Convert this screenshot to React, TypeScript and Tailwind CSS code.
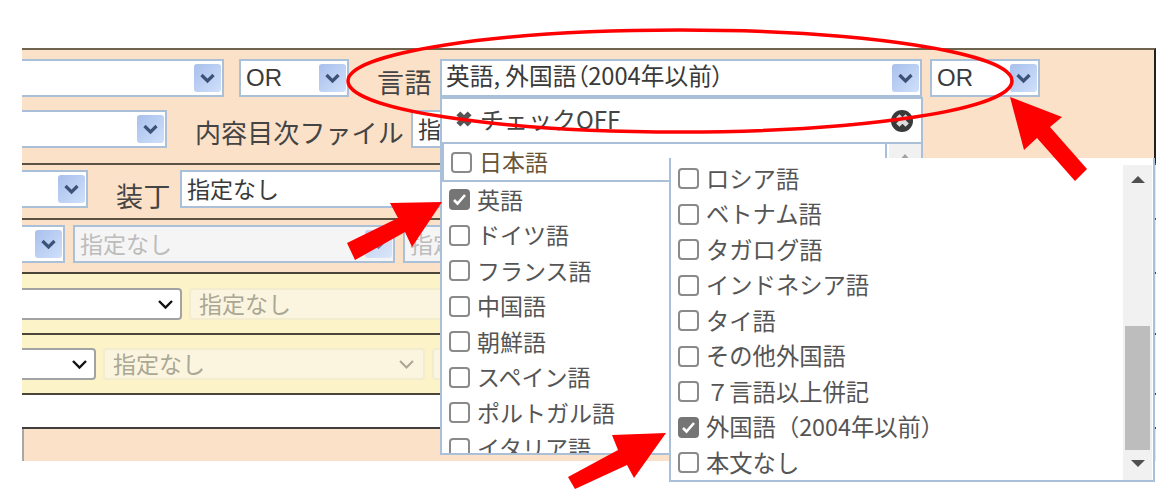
const leftLanguages = ["英語", "ドイツ語", "フランス語", "中国語", "朝鮮語", "スペイン語", "ポルトガル語", "イタリア語"];

const rightLanguages = [
  { name: "ロシア語", checked: false },
  { name: "ベトナム語", checked: false },
  { name: "タガログ語", checked: false },
  { name: "インドネシア語", checked: false },
  { name: "タイ語", checked: false },
  { name: "その他外国語", checked: false },
  { name: "７言語以上併記", checked: false },
  { name: "外国語（2004年以前）", checked: true },
  { name: "本文なし", checked: false },
];

function BlueChevron({ faded = false }: { faded?: boolean }) {
  return (
    <span
      className={`flex h-[28px] w-[27px] shrink-0 items-center justify-center rounded-[3px] bg-gradient-to-br from-[#a9c0ec] to-[#cfe0fb] ${faded ? "opacity-70" : ""}`}
    >
      <svg width="17" height="11" viewBox="0 0 17 11" fill="none">
        <path d="M2.5 2l6 6 6-6" stroke="#3d5278" strokeWidth="3.2" />
      </svg>
    </span>
  );
}

function Field({ className, children, text = "", latin = false, noLeft = false, disabled = false }: { className: string; children?: React.ReactNode; text?: string; latin?: boolean; noLeft?: boolean; disabled?: boolean }) {
  return (
    <div
      className={`flex h-[38px] items-center justify-between border-2 border-[#a9c0d8] pl-[5px] pr-[1px] ${noLeft ? "border-l-0" : ""} ${disabled ? "bg-[#f5f5f5] text-[#bcbcbc]" : "bg-white text-[#3a3a3a]"} ${className}`}
    >
      <span className={`whitespace-nowrap leading-[30px] ${latin ? "-mt-[1px] font-['Liberation_Sans',sans-serif] text-[24px]" : "-mt-[3px] text-[23px]"}`}>{text}</span>
      {children}
    </div>
  );
}

function YellowDisabled({ className, chevron = false }: { className: string; chevron?: boolean }) {
  return (
    <div className={`flex h-[32px] items-center justify-between rounded-[4px] border-2 border-[#f3eccf] bg-[#fbf5df] pl-[8px] pr-[8px] text-[#aaa794] ${className}`}>
      <span className="-mt-[3px] whitespace-nowrap text-[23px] leading-[28px]">指定なし</span>
      {chevron && (
        <svg width="17" height="11" viewBox="0 0 17 11" fill="none">
          <path d="M2 2l6.5 6.5L15 2" stroke="#aaa794" strokeWidth="2" />
        </svg>
      )}
    </div>
  );
}

function BlackSelect({ className }: { className: string }) {
  return (
    <div className={`flex h-[32px] items-center justify-end rounded-r-[4px] border-2 border-l-0 border-[#a3a3a3] bg-white pr-[6px] ${className}`}>
      <svg width="17" height="11" viewBox="0 0 17 11" fill="none">
        <path d="M2 2l6.5 6.5L15 2" stroke="#111111" strokeWidth="2.4" />
      </svg>
    </div>
  );
}

function Check({ checked = false }: { checked?: boolean }) {
  if (checked) {
    return (
      <span className="flex h-[21px] w-[21px] shrink-0 items-center justify-center rounded-[4px] bg-[#757575]">
        <svg width="15" height="13" viewBox="0 0 15 13" fill="none">
          <path d="M2 7l3.5 3.5L13 2" stroke="white" strokeWidth="2.6" />
        </svg>
      </span>
    );
  }
  return <span className="h-[21px] w-[21px] shrink-0 rounded-[4px] border-2 border-[#8a8a8a] bg-white" />;
}

function Cross({ color, size = 16 }: { color: string; size?: number }) {
  return (
    <svg width={size} height={size} viewBox="0 0 16 16" fill="none">
      <path d="M3 3l10 10M13 3L3 13" stroke={color} strokeWidth="5" />
    </svg>
  );
}

export default function App() {
  return (
    <div className="relative h-[489px] w-[1167px] overflow-hidden bg-white font-['Noto_Sans_CJK_JP','Noto_Sans',sans-serif] text-[#333333]">
      <div className="ml-[22px] flex w-[1134px] flex-col pt-[48px]">
        <section className="flex h-[115px] flex-col gap-[13px] border-t-2 border-r-2 border-t-[#6f6450] border-r-[#222222] bg-[#fbe1c8] pt-[9px]">
          <div className="flex items-center">
            <Field className="w-[202px]" noLeft>
              <BlueChevron />
            </Field>
            <Field className="ml-[15px] w-[110px]" text="OR" latin>
              <BlueChevron />
            </Field>
            <span className="ml-[28px] mt-[8px] w-[55px] whitespace-nowrap text-[27px] leading-[30px] tracking-[0.5px] text-[#444444]">言語</span>
            <Field className="ml-[8px] w-[482px]">
              <BlueChevron />
            </Field>
            <Field className="ml-[8px] w-[110px]" text="OR" latin>
              <BlueChevron />
            </Field>
          </div>
          <div className="flex items-center">
            <Field className="w-[145px]" noLeft>
              <BlueChevron />
            </Field>
            <span className="ml-[28px] mt-[5px] w-[208px] whitespace-nowrap text-[26px] leading-[32px] tracking-[0.1px] text-[#444444]">内容目次ファイル</span>
            <Field className="ml-[8px] w-[200px]" text="指定なし" />
          </div>
        </section>

        <section className="flex h-[55px] items-start border-t-2 border-[#5a5142] bg-[#fbe1c8] pt-[5px]">
          <Field className="w-[66px]" noLeft>
            <BlueChevron />
          </Field>
          <span className="ml-[28px] mt-[10px] w-[54px] whitespace-nowrap text-[27px] leading-[32px] tracking-[0.5px] text-[#444444]">装丁</span>
          <Field className="ml-[10px] w-[400px]" text="指定なし" />
        </section>

        <section className="flex h-[54px] items-start gap-[8px] border-t-2 border-[#5a5142] bg-[#fbe1c8] pt-[5px]">
          <Field className="w-[43px]" noLeft>
            <BlueChevron />
          </Field>
          <Field className="w-[322px]" text="指定なし" disabled>
            <BlueChevron faded />
          </Field>
          <Field className="w-[200px]" text="指定なし" disabled />
        </section>

        <section className="flex h-[61px] items-start gap-[7px] border-t-2 border-[#4a4538] bg-[#fdf3c8] pt-[14px]">
          <BlackSelect className="w-[160px]" />
          <YellowDisabled className="w-[400px]" />
        </section>

        <section className="flex h-[60px] items-start gap-[7px] border-t-2 border-[#4a4538] bg-[#fdf3c8] pt-[13px]">
          <BlackSelect className="w-[74px]" />
          <YellowDisabled className="w-[322px]" chevron />
          <YellowDisabled className="w-[200px]" />
        </section>

        <section className="h-[34px] border-t-2 border-[#4a4538] bg-white" />

        <section className="h-[34px] border-t-2 border-[#3f3f3f] bg-[#fbe1c8]">
          <div className="h-full w-[2px] bg-[#a8a8a8]" />
        </section>
      </div>

      {/* field value sits above the open list */}
      <div className="absolute left-[446px] top-[60px] whitespace-nowrap text-[23.7px] leading-[30px] text-[#3a3a3a] [font-feature-settings:'palt']">
        英語, 外国語（2004年以前）
      </div>

      {/* first dropdown */}
      <div className="absolute left-[440px] top-[97px] flex h-[358px] w-[483px] flex-col overflow-hidden border-2 border-[#a9c0d8] bg-white">
        <div className="flex h-[43px] shrink-0 items-center justify-between pl-[13px] pr-[8px]">
          <span className="-mt-[3px] flex items-center gap-[7px] text-[24px] leading-[34px] text-[#444444]">
            <Cross color="#555555" size={18} />
            チェックOFF
          </span>
          <span className="flex h-[22px] w-[22px] items-center justify-center rounded-full bg-[#3a3a3a]">
            <Cross color="#dddddd" size={15} />
          </span>
        </div>
        <div className="relative flex flex-1 flex-col overflow-hidden border-t-2 border-[#a9c0d8] pl-[7px]">
          <div className="-ml-[7px] flex h-[38px] w-[445px] shrink-0 items-center gap-[7px] border-2 border-t-0 border-[#a9c0d8] pl-[7px] text-[23px] leading-[30px] text-[#6b5335]">
            <Check />
            <span className="-mt-[2px]">日本語</span>
          </div>
          {leftLanguages.map((name) => (
            <div key={name} className="flex h-[35.5px] shrink-0 items-center gap-[7px] text-[23px] leading-[30px] text-[#555555]">
              <Check checked={name === "英語"} />
              <span className="-mt-[2px]">{name}</span>
            </div>
          ))}
          <div className="absolute right-0 top-0 flex h-full w-[32px] justify-center bg-[#f1f1f1] pt-[10px]">
            <span className="h-0 w-0 border-x-[6px] border-b-[7px] border-x-transparent border-b-[#a0a0a0]" />
          </div>
        </div>
      </div>

      {/* second dropdown */}
      <div className="absolute left-[669px] top-[158px] flex h-[324px] w-[486px] border-b-2 border-l-2 border-r-2 border-[#a9c0d8] bg-white">
        <div className="flex flex-1 flex-col pl-[7px] pt-[3px]">
          {rightLanguages.map((item) => (
            <div key={item.name} className="flex h-[35.5px] shrink-0 items-center gap-[7px] whitespace-nowrap text-[23.3px] leading-[30px] text-[#555555]">
              <Check checked={item.checked} />
              <span className="-mt-[2px]">{item.name}</span>
            </div>
          ))}
        </div>
        <div className="mr-[1px] mt-[7px] flex w-[29px] flex-col items-center bg-[#f1f1f1]">
          <span className="mt-[11px] h-0 w-0 border-x-[7px] border-b-[7px] border-x-transparent border-b-[#505050]" />
          <div className="mt-[143px] h-[124px] w-[25px] bg-[#bdbdbd]" />
          <span className="mt-[10px] h-0 w-0 border-x-[7px] border-t-[7px] border-x-transparent border-t-[#505050]" />
        </div>
      </div>

      {/* annotations */}
      <svg className="absolute left-0 top-0" width="1167" height="489" viewBox="0 0 1167 489" fill="none">
        <ellipse cx="680" cy="81" rx="332" ry="51" stroke="#ff0000" strokeWidth="3.5" />
        <polygon fill="#ff0000" points="442,202 412,247 405,232 355,260 347,243 398,218 390,203" />
        <polygon fill="#ff0000" points="1010,97 1062,117 1050,127 1087,169 1075,181 1037,138 1024,150" />
        <polygon fill="#ff0000" points="666,433 634,478 627,465 575,489 568,477 618,450 612,435" />
      </svg>
    </div>
  );
}
